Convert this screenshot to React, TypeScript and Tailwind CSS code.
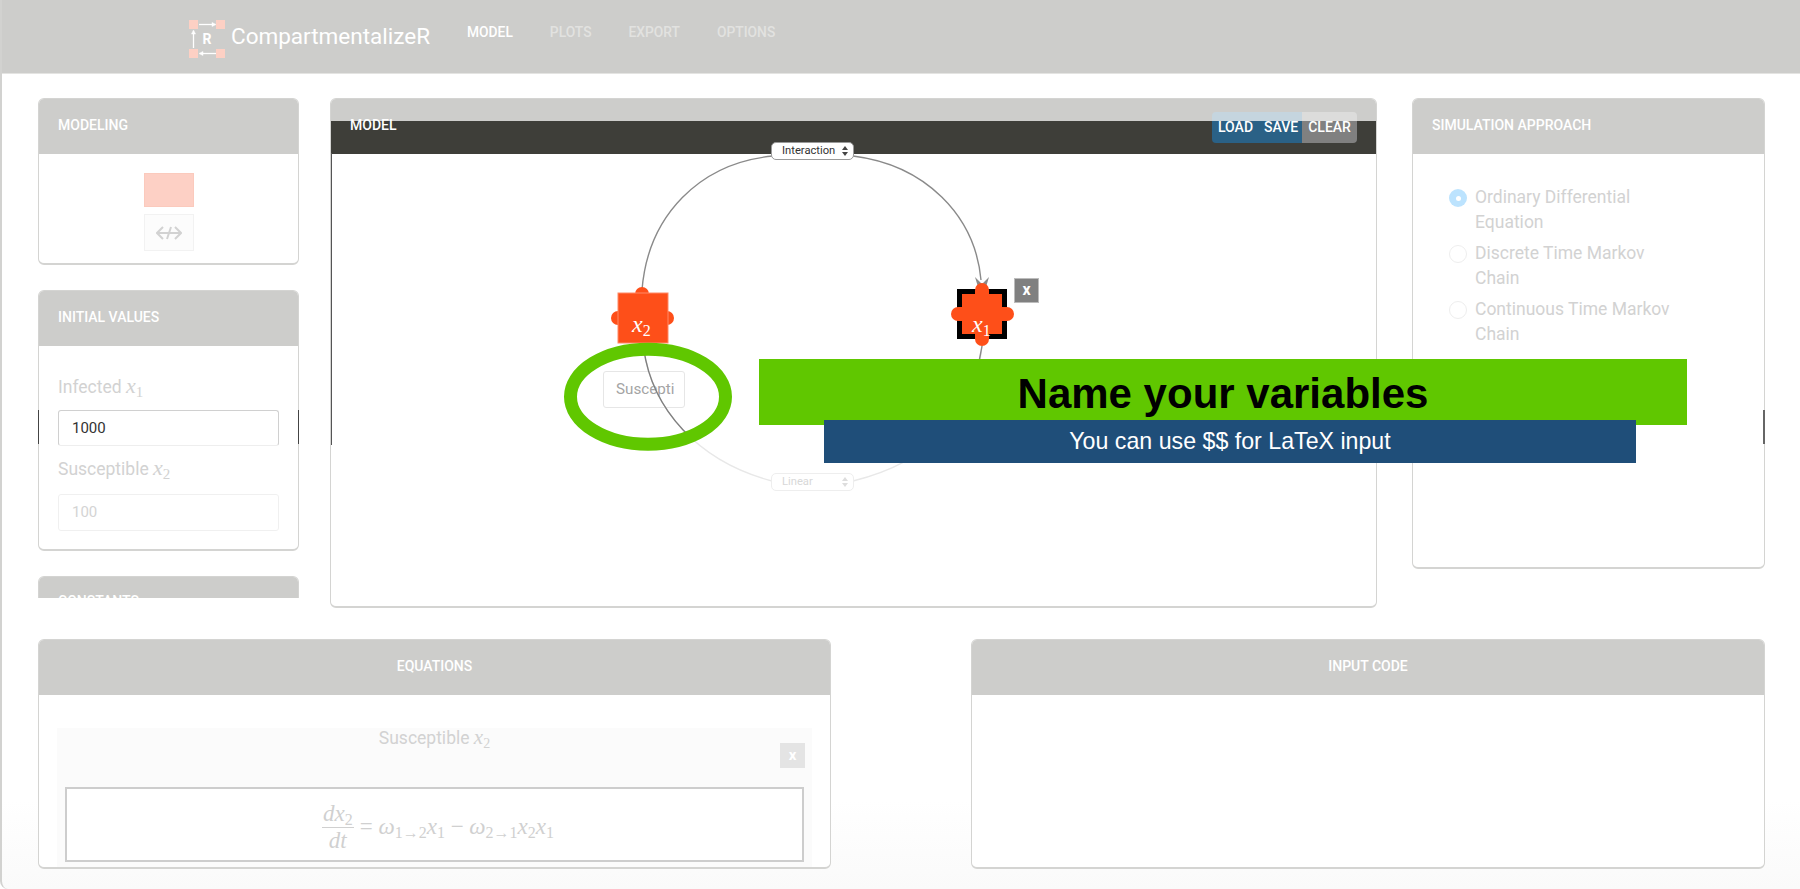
import React from "react";

const serif = "font-['Liberation_Serif',serif] italic";

function Panel({ title, center, titleClass, className, children }: { title: string; center?: boolean; titleClass?: string; className: string; children?: React.ReactNode }) {
  return (
    <section className={`rounded-[6px] border border-b-2 border-[#d4d4d2] bg-white overflow-hidden flex flex-col ${className}`}>
      <div className={`h-[55px] shrink-0 bg-[#cdcdcb] flex items-center px-[19px] text-[14px] font-medium text-white uppercase ${titleClass ?? "pb-[3px]"} ${center ? "justify-center" : ""}`}>
        {title}
      </div>
      {children}
    </section>
  );
}

function Radio({ on, lines }: { on?: boolean; lines: string[] }) {
  return (
    <div className="flex gap-[8px] text-[17.5px] leading-[25px] text-[#d2d2d2] mb-[6px]">
      <span className={`mt-[4px] w-[18px] h-[18px] shrink-0 rounded-full flex items-center justify-center ${on ? "bg-[#bce3fe]" : "border border-[#eeeeee] bg-white"}`}>
        {on && <span className="w-[5px] h-[5px] rounded-full bg-white" />}
      </span>
      <span>
        {lines[0]}
        <br />
        {lines[1]}
      </span>
    </div>
  );
}

function Sel({ label, dim, className }: { label: string; dim?: boolean; className: string }) {
  return (
    <div className={`absolute left-[771px] w-[83px] h-[18px] rounded-[5px] border bg-white flex items-center justify-between pl-[10px] pr-[4px] text-[11.2px] ${dim ? "border-[#eeeeee] text-[#d8d8d8]" : "border-[#9a9a9a] text-[#333333]"} ${className}`}>
      <span>{label}</span>
      <svg width="8" height="12" viewBox="0 0 8 12">
        <path d="M4 1 L7 5 H1 Z M4 11 L1 7 H7 Z" fill={dim ? "#dddddd" : "#444444"} />
      </svg>
    </div>
  );
}

function Tick({ className }: { className: string }) {
  return <div className={`absolute top-[410px] h-[34px] w-[1px] ${className}`} />;
}

export default function App() {
  return (
    <div className="relative w-[1800px] h-[889px] overflow-hidden bg-gradient-to-b from-white from-90% to-[#fafafa] font-[Roboto,sans-serif] border-l-2 border-[#d2d2d0] rounded-bl-[8px]">
      <header className="h-[74px] -ml-[2px] bg-[#cdcdcb] border-b border-[#e4e4e2] border-l-2 border-l-[#c0c0be] flex items-center pl-[187px]">
        <svg width="38" height="40" viewBox="0 0 38 40" className="shrink-0 mt-[6px]">
          <g fill="#fdd0c4">
            <rect x="0" y="0" width="9" height="9" />
            <rect x="27" y="0" width="9" height="9" />
            <rect x="0" y="29" width="9" height="9" />
            <rect x="27" y="29" width="9" height="9" />
          </g>
          <g stroke="#ffffff" strokeWidth="1.3" fill="#ffffff">
            <path d="M10 4.5 H24" />
            <path d="M27 4.5 L23 2.5 V6.5 Z" strokeWidth="0.5" />
            <path d="M27 33.5 H13" />
            <path d="M10 33.5 L14 31.5 V35.5 Z" strokeWidth="0.5" />
            <path d="M4.5 28 V13" />
            <path d="M4.5 10 L2.5 14 H6.5 Z" strokeWidth="0.5" />
          </g>
          <text x="18" y="24" textAnchor="middle" fontSize="14" fontWeight="700" fill="#ffffff" fontFamily="Roboto">R</text>
        </svg>
        <span className="ml-[4px] mt-[1px] text-[22.5px] text-white">CompartmentalizeR</span>
        <nav className="ml-[37px] mb-[9px] flex gap-[37px] text-[13.8px] font-medium text-[#e2e2e0]">
          <span className="text-white">MODEL</span>
          <span>PLOTS</span>
          <span>EXPORT</span>
          <span>OPTIONS</span>
        </nav>
      </header>

      <main className="pl-[36px] pt-[24px]">
        <div className="flex items-start">
          <div className="w-[261px] h-[500px] overflow-hidden flex flex-col gap-[25px] shrink-0">
            <Panel title="Modeling" className="h-[167px] shrink-0">
              <div className="flex flex-col items-center gap-[7px] pt-[19px]">
                <div className="w-[50px] h-[34px] bg-[#fdd0c5] border border-[#fbcabd]" />
                <div className="w-[50px] h-[37px] bg-[#fcfcfc] border border-[#f2f2f2] flex items-center justify-center">
                  <svg width="26" height="16" viewBox="0 0 26 16" fill="none" stroke="#d2d2d2" strokeWidth="2">
                    <path d="M1 8 H25 M7 2 L1 8 L7 14 M19 2 L25 8 L19 14 M15 2 L11 14" />
                  </svg>
                </div>
              </div>
            </Panel>
            <Panel title="Initial values" className="h-[261px] shrink-0">
              <div className="px-[19px] pt-[28px] text-[17.5px] text-[#d2d2d2]">
                <div className="h-[24px] leading-[24px]">
                  Infected <span className={`${serif} text-[22px]`}>x<sub className="not-italic text-[15px]">1</sub></span>
                </div>
                <div className="mt-[12px] h-[36px] w-[221px] rounded-[3px] border border-[#d0d0d0] border-b-[#eeeeee] bg-white flex items-center pl-[13px] text-[15px] text-[#333333]">1000</div>
                <div className="mt-[10px] h-[24px] leading-[24px]">
                  Susceptible <span className={`${serif} text-[22px]`}>x<sub className="not-italic text-[15px]">2</sub></span>
                </div>
                <div className="mt-[14px] h-[37px] w-[221px] rounded-[3px] border border-[#f0f0f0] bg-white flex items-center pl-[13px] text-[15px] text-[#d4d4d4]">100</div>
              </div>
            </Panel>
            <Panel title="Constants" titleClass="pb-[7px]" className="h-[120px] shrink-0" />
          </div>

          <section className="relative ml-[31px] w-[1047px] h-[510px] shrink-0 rounded-[6px] border border-b-2 border-[#d4d4d2] overflow-hidden bg-white">
            <div className="h-[22px] bg-[#cdcdcb]" />
            <div className="h-[33px] bg-[#3e3e39]" />
            <div className="absolute left-0 top-[54px] h-[292px] w-[1px] bg-[#555555]" />
            <div className="absolute left-[19px] top-[17px] text-[14px] font-medium text-white leading-[18px]">MODEL</div>
            <div className="absolute left-[881px] top-[13px] w-[145px] h-[31px] rounded-[4px] overflow-hidden flex text-[14px] font-medium text-white">
              <div className="w-[90px] flex flex-col">
                <div className="h-[9px] bg-[#c5d5df]" />
                <div className="flex-1 bg-[#2a6186]" />
              </div>
              <div className="flex-1 flex flex-col">
                <div className="h-[9px] bg-[#dcdcdb]" />
                <div className="flex-1 bg-[#808080]" />
              </div>
              <div className="absolute inset-0 flex items-center pl-[6px] pb-[2px] gap-[11px] leading-none">
                <span>LOAD</span>
                <span>SAVE</span>
                <span className="ml-[-1px]">CLEAR</span>
              </div>
            </div>
          </section>

          <div className="ml-[35px] shrink-0">
            <Panel title="Simulation approach" className="w-[353px] h-[471px]">
              <div className="pl-[36px] pr-[40px] pt-[31px]">
                <Radio on lines={["Ordinary Differential", "Equation"]} />
                <Radio lines={["Discrete Time Markov", "Chain"]} />
                <Radio lines={["Continuous Time Markov", "Chain"]} />
              </div>
            </Panel>
          </div>
        </div>

        <div className="flex mt-[31px]">
          <Panel title="Equations" center className="w-[793px] h-[230px] shrink-0">
            <div className="relative mx-[18px] mt-[33px] flex-1 bg-[#fbfbfb] flex flex-col items-center">
              <div className="-mt-[3px] h-[24px] text-[17.5px] text-[#d2d2d2] leading-[24px]">
                Susceptible <span className={`${serif} text-[21px]`}>x<sub className="not-italic text-[14px]">2</sub></span>
              </div>
              <div className="absolute left-[723px] top-[15px] w-[25px] h-[25px] bg-[#e4e4e4] text-white font-bold text-[15px] flex items-center justify-center">x</div>
              <div className="mt-[38px] w-[739px] h-[75px] border-2 border-[#cdcdcd] bg-white flex items-center justify-center pl-[7px] pt-[5px] text-[#d0d0d0] font-['Liberation_Serif',serif] text-[23px]">
                <span className="inline-flex flex-col items-center italic mr-[6px] leading-[25px]">
                  <span className="border-b border-[#d0d0d0] px-[1px] pb-[1px]">dx<sub className="not-italic text-[16px]">2</sub></span>
                  <span>dt</span>
                </span>
                <span>=&nbsp;</span>
                <span className="italic">ω<sub className="not-italic text-[16px]">1→2</sub>x<sub className="not-italic text-[16px]">1</sub></span>
                <span>&nbsp;−&nbsp;</span>
                <span className="italic">ω<sub className="not-italic text-[16px]">2→1</sub>x<sub className="not-italic text-[16px]">2</sub>x<sub className="not-italic text-[16px]">1</sub></span>
              </div>
            </div>
          </Panel>
          <Panel title="Input code" center className="ml-[140px] w-[794px] h-[230px] shrink-0" />
        </div>
      </main>

      {/* borders seen through the dimming layer */}
      <Tick className="left-[-2px] bg-[#000000]" />
      <Tick className="left-[36px] bg-[#444444]" />
      <Tick className="left-[296px] bg-[#444444]" />
      <Tick className="left-[1761px] w-[2px] bg-[#666666]" />

      {/* diagram canvas, in page coordinates */}
      <div className="absolute -left-[2px] top-0 w-[1800px] h-[889px] pointer-events-none">
        <div className="absolute left-[603px] top-[371px] w-[82px] h-[37px] rounded-[3px] border border-[#e6e6e6] bg-white flex items-center pl-[12px] text-[15.2px] text-[#a4a4a4]">Suscepti</div>

        <svg width="1800" height="889" className="absolute inset-0" fill="none">
          <defs>
            <clipPath id="hole">
              <ellipse cx="648" cy="396.7" rx="72" ry="48" />
            </clipPath>
            <clipPath id="upper">
              <rect x="960" y="340" width="50" height="20" />
            </clipPath>
          </defs>
          <path d="M642 290 C 648 215 700 163 773 156" stroke="#8a8a8a" strokeWidth="1.4" />
          <path d="M853 156 C 925 165 975 215 981 280" stroke="#8a8a8a" strokeWidth="1.4" />
          <path d="M643 343 C 650 410 700 462 772 481" stroke="#e8e8e8" strokeWidth="1.4" />
          <path d="M643 343 C 650 410 700 462 772 481" stroke="#808080" strokeWidth="1.4" clipPath="url(#hole)" />
          <path d="M982 346 C 975 415 930 462 853 481" stroke="#e8e8e8" strokeWidth="1.4" />
          <path d="M982 346 C 981 352 980 356 979 362" stroke="#8a8a8a" strokeWidth="1.4" clipPath="url(#upper)" />

          <g fill="#fe4f19">
            <circle cx="642" cy="294" r="7" />
            <circle cx="618" cy="318" r="7" />
            <circle cx="667" cy="318" r="7" />
          </g>
          <rect x="618" y="293" width="50" height="50" fill="#fe4f19" stroke="#ff8a66" strokeWidth="1" />

          <path d="M975 277 L982 284 L989 277 L986 287 H978 Z" fill="#8a8a8a" />
          <rect x="959.5" y="291.5" width="45" height="45" fill="#fe4f19" stroke="#000000" strokeWidth="5" />
          <rect x="975" y="283" width="14" height="63" rx="7" fill="#fe4f19" />
          <rect x="951" y="307" width="63" height="14" rx="7" fill="#fe4f19" />

          <ellipse cx="648" cy="396.7" rx="77.5" ry="47.5" stroke="#60c700" strokeWidth="13" />
        </svg>

        <div className={`absolute left-[632px] top-[309px] text-[24px] leading-[30px] text-white ${serif}`}>x<sub className="not-italic text-[16px]">2</sub></div>
        <div className={`absolute left-[972px] top-[309px] text-[24px] leading-[30px] text-white ${serif}`}>x<sub className="not-italic text-[16px]">1</sub></div>
        <div className="absolute left-[1014px] top-[278px] w-[25px] h-[25px] bg-[#808080] border border-[#bcbcbc] text-white font-bold text-[16px] flex items-center justify-center pb-[2px]">x</div>

        <Sel label="Interaction" className="top-[142px]" />
        <Sel label="Linear" dim className="top-[473px]" />

        {/* tutorial banners */}
        <div className="absolute left-[759px] top-[359px] w-[928px] h-[66px] bg-[#60c700] flex items-center justify-center pt-[3px] font-['Liberation_Sans',sans-serif] font-bold text-[42px] text-black">
          Name your variables
        </div>
        <div className="absolute left-[824px] top-[420px] w-[812px] h-[43px] bg-[#1f4e79] flex items-center justify-center font-['Liberation_Sans',sans-serif] text-[23.2px] text-white">
          You can use $$ for LaTeX input
        </div>
      </div>
    </div>
  );
}
